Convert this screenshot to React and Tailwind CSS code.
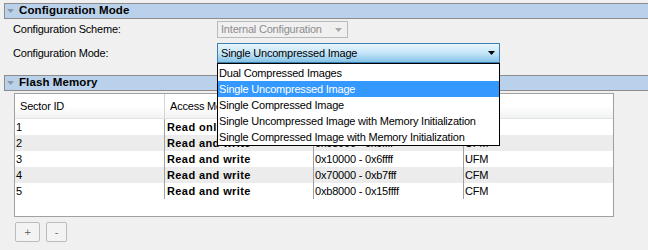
import React from 'react'

const rows = [
  { id: '1', access: 'Read only', range: '0x00000 - 0x07fff', type: 'UFM' },
  { id: '2', access: 'Read and write', range: '0x08000 - 0x0ffff', type: 'UFM' },
  { id: '3', access: 'Read and write', range: '0x10000 - 0x6ffff', type: 'UFM' },
  { id: '4', access: 'Read and write', range: '0x70000 - 0xb7fff', type: 'CFM' },
  { id: '5', access: 'Read and write', range: '0xb8000 - 0x15ffff', type: 'CFM' },
]

const modes = [
  'Dual Compressed Images',
  'Single Uncompressed Image',
  'Single Compressed Image',
  'Single Uncompressed Image with Memory Initialization',
  'Single Compressed Image with Memory Initialization',
]

function Arrow({ color }) {
  return (
    <svg width="7" height="4" viewBox="0 0 7 4">
      <path d="M0 0H7L3.5 4Z" fill={color} />
    </svg>
  )
}

function SectionHeader({ title }) {
  return (
    <div className="ml-[4px] h-[16px] flex items-center border border-r-0 border-[#8c8c8c] bg-[#b9d1ea]">
      <div className="ml-[2px] flex">
        <Arrow color="#8f9aa5" />
      </div>
      <span className="ml-[5px] text-[11.5px] font-bold tracking-[0.1px] text-black leading-none">{title}</span>
    </div>
  )
}

export default function App() {
  return (
    <div className="relative w-[648px] h-[250px] overflow-hidden bg-[#f0f0f0] pt-[3px] font-['Liberation_Sans',Arial,sans-serif] text-[11px] tracking-[-0.2px] text-black">
      <SectionHeader title="Configuration Mode" />

      {/* Configuration fields */}
      <div className="grid grid-cols-[204px_auto] gap-y-[5px] pl-[13px] pt-[2px]">
        <div className="flex items-center h-[17px]">Configuration Scheme:</div>
        <div className="w-[131px] h-[17px] flex items-center justify-between border border-[#b9b9b9] pl-[3px] pr-[5px] text-[#8d8d8d]">
          <span>Internal Configuration</span>
          <Arrow color="#a8a8a8" />
        </div>
        <div className="flex items-center h-[20px]">Configuration Mode:</div>
        <div className="w-[283px] h-[20px] flex items-center justify-between border border-[#3c7fb1] bg-gradient-to-b from-[#eaf6fd] via-[#c4e5f8] to-[#86c3e8] pl-[3px] pr-[4px]">
          <span>Single Uncompressed Image</span>
          <Arrow color="#000000" />
        </div>
      </div>

      <div className="mt-[12px]">
        <SectionHeader title="Flash Memory" />
      </div>

      {/* Sector table */}
      <div className="ml-[14px] mt-[2px] w-[600px] h-[124px] border border-[#a0a0a0] bg-white">
        <div className="flex h-[25px] border-b border-[#e3e3e3] bg-gradient-to-b from-white via-white to-[#f1f2f3]">
          {['Sector ID', 'Access Mode', 'Address Range', 'Type'].map((h, i) => (
            <div
              key={h}
              className={`flex items-center pl-[5px] ${i === 3 ? 'flex-1' : 'w-[150px] border-r border-[#d5d5d5]'}`}
            >
              {h}
            </div>
          ))}
        </div>
        {rows.map((r, i) => (
          <div key={r.id} className={`flex h-[16px] ${i % 2 === 1 ? 'bg-[#ececec]' : 'bg-white'}`}>
            <div className="w-[150px] flex items-center pl-[1px] border-r border-[#a0a0a0]">{r.id}</div>
            <div className="w-[149px] flex items-center pl-[2px] border-r border-[#a0a0a0] font-bold tracking-[0.4px]">{r.access}</div>
            <div className="w-[150px] flex items-center pl-[1px] border-r border-[#a0a0a0]">{r.range}</div>
            <div className="flex-1 flex items-center pl-[1px]">{r.type}</div>
          </div>
        ))}
      </div>

      {/* Add / remove */}
      <div className="flex gap-[6px] ml-[15px] mt-[5px]">
        <button className="w-[25px] h-[20px] rounded-[2px] border border-[#bcbcbc] bg-[#f3f3f3] text-[#6e6e6e] text-[11px] leading-none">+</button>
        <button className="w-[21px] h-[20px] rounded-[2px] border border-[#bcbcbc] bg-[#f3f3f3] text-[#6e6e6e] text-[11px] leading-none">-</button>
      </div>

      {/* Open dropdown list */}
      <div className="absolute left-[217px] top-[63px] w-[283px] border border-black bg-white pt-[1px]">
        {modes.map((m, i) => (
          <div
            key={m}
            className={`h-[16px] flex items-center pl-[1px] ${i === 1 ? 'bg-[#3399ff] text-white' : ''}`}
          >
            {m}
          </div>
        ))}
      </div>
    </div>
  )
}
